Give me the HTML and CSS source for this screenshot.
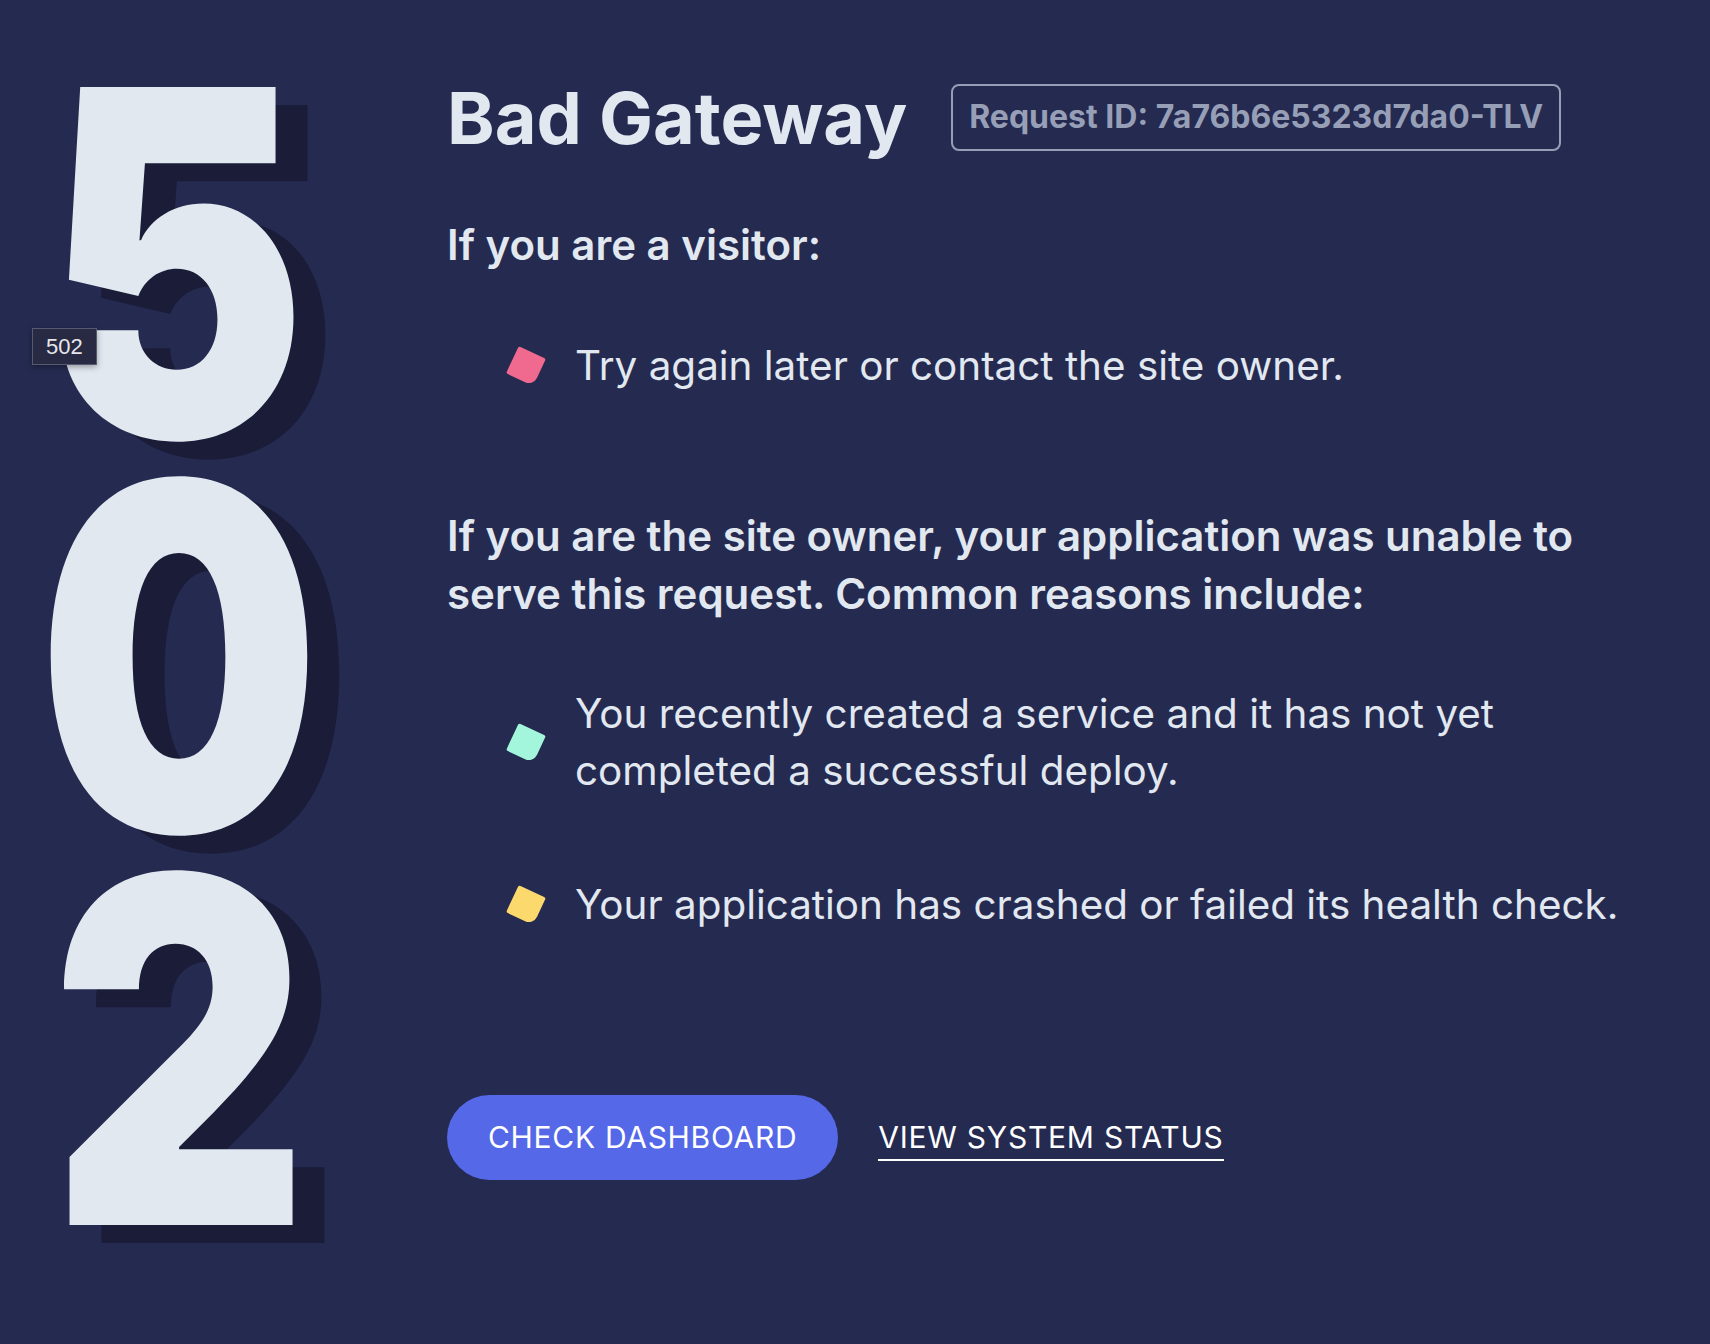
FILE: index.html
```html
<!DOCTYPE html>
<html lang="en">
<head>
<meta charset="utf-8">
<title>502 Bad Gateway</title>
<link rel="stylesheet" href="styles.css">
</head>
<body>
<main class="page">
  <div class="code" title="502">
    <span class="digit digit-five">5</span>
    <span class="digit">0</span>
    <span class="digit">2</span>
  </div>
  <section class="content">
    <header class="head">
      <h1 class="title">Bad Gateway</h1>
      <div class="request-id">Request ID: 7a76b6e5323d7da0-TLV</div>
    </header>
    <h2 class="subhead subhead-visitor">If you are a visitor:</h2>
    <ul class="reasons reasons-visitor">
      <li class="reason"><span class="mark mark-pink"></span><span class="reason-text">Try again later or contact the site owner.</span></li>
    </ul>
    <h2 class="subhead subhead-owner">If you are the site owner, your application was unable to serve this request. Common reasons include:</h2>
    <ul class="reasons reasons-owner">
      <li class="reason"><span class="mark mark-mint"></span><span class="reason-text">You recently created a service and it has not yet completed a successful deploy.</span></li>
      <li class="reason"><span class="mark mark-yellow"></span><span class="reason-text">Your application has crashed or failed its health check.</span></li>
    </ul>
    <div class="actions">
      <a class="btn-primary" href="#">CHECK DASHBOARD</a>
      <a class="link-status" href="#">VIEW SYSTEM STATUS</a>
    </div>
  </section>
  <div class="tooltip">502</div>
</main>
</body>
</html>
```
FILE: styles.css
```css
html, body {
  margin: 0;
  padding: 0;
}
body {
  background: #252a51;
  color: #e2e8f0;
  font-family: Inter, "Noto Sans", "Liberation Sans", sans-serif;
  min-height: 100vh;
}
.page {
  position: relative;
  display: flex;
  align-items: flex-start;
  min-height: 1344px;
}
.code {
  flex: none;
  width: 358px;
  display: flex;
  flex-direction: column;
  align-items: center;
  padding-top: 65px;
  font-family: Inter, "Noto Sans", sans-serif;
  font-size: 481px;
  font-weight: 900;
  line-height: 394px;
  color: #e2e8f0;
  text-shadow: 38.5px 18px 0 #1a1c38;
}
.digit {
  display: block;
  transform: scaleX(0.83);
  transform-origin: center;
}
.digit-five {
  margin-right: 10px;
}
.content {
  flex: none;
  width: 1200px;
  margin-left: 89px;
  padding-top: 74px;
}
.head {
  display: flex;
  align-items: center;
  gap: 44px;
}
.title {
  margin: 0;
  font-size: 72px;
  font-weight: 700;
  line-height: 1.21;
  color: #e2e8f0;
}
.request-id {
  border: 2px solid #979fb7;
  border-radius: 8px;
  padding: 12px 16px;
  font-size: 32px;
  font-weight: 700;
  line-height: 1.21;
  color: #979fb7;
  white-space: nowrap;
}
.subhead {
  margin: 0;
  font-size: 42px;
  font-weight: 600;
  color: #e2e8f0;
}
.subhead-visitor {
  margin-top: 59px;
  line-height: 1.21;
}
.subhead-owner {
  margin-top: 113px;
  line-height: 1.375;
}
.reasons {
  list-style: none;
  margin: 0;
  padding: 0;
}
.reasons-visitor {
  margin-top: 67px;
}
.reasons-owner {
  margin-top: 63px;
}
.reason {
  display: flex;
  align-items: center;
  padding-left: 64px;
  font-size: 40.4px;
  line-height: 1.4;
  color: #e2e8f0;
}
.reason + .reason {
  margin-top: 78px;
}
.mark {
  flex: none;
  width: 30px;
  height: 30px;
  margin-right: 34px;
  border-radius: 2px 2px 9px 2px;
  transform: rotate(25deg);
}
.mark-pink { background: #f0698e; }
.mark-mint { background: #a3f6dc; }
.mark-yellow { background: #fcd96c; }
.actions {
  margin-top: 161px;
  display: flex;
  align-items: center;
  gap: 40px;
}
.btn-primary {
  display: inline-flex;
  align-items: center;
  height: 85px;
  padding: 0 41px;
  border-radius: 43px;
  background: #5468e8;
  color: #ffffff;
  font-size: 30px;
  font-weight: 400;
  letter-spacing: 0.7px;
  text-decoration: none;
}
.link-status {
  color: #ffffff;
  font-size: 30px;
  font-weight: 400;
  line-height: 1.21;
  letter-spacing: 0.75px;
  text-decoration: none;
  border-bottom: 2px solid #ffffff;
  padding: 6px 0 4px;
}
.tooltip {
  position: absolute;
  left: 32px;
  top: 328px;
  padding: 5px 13px;
  background: #272a42;
  border: 1px solid #565a70;
  color: #e6e6ea;
  font-family: "Liberation Sans", Arial, sans-serif;
  font-size: 22px;
  line-height: 1.15;
  box-shadow: 0 2px 6px rgba(0, 0, 0, 0.35);
}
```
